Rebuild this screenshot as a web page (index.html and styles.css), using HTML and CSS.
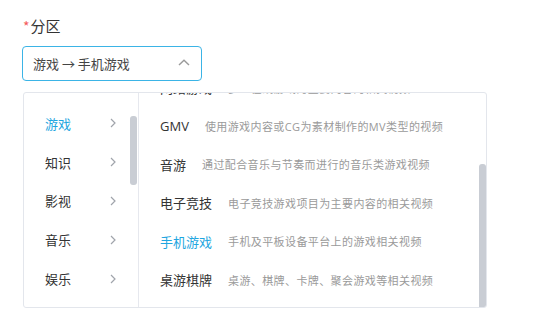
FILE: index.html
```html
<!DOCTYPE html>
<html lang="zh">
<head>
<meta charset="utf-8">
<link rel="stylesheet" href="styles.css">
</head>
<body>
<div class="field">
  <div class="label"><span class="req">*</span>分区</div>
  <div class="select">
    <span class="value">游戏 → 手机游戏</span>
    <svg class="arrow" width="12" height="7" viewBox="0 0 12 7"><path d="M1 6 L6 1.2 L11 6" fill="none" stroke="#9a9a9a" stroke-width="1.4"/></svg>
  </div>
  <div class="panel">
    <div class="col left">
      <ul class="list">
        <li class="item active"><span>游戏</span><svg class="chev" width="6" height="10" viewBox="0 0 6 10"><path d="M1 1 L5 5 L1 9" fill="none" stroke="#a0a4ab" stroke-width="1.2"/></svg></li>
        <li class="item"><span>知识</span><svg class="chev" width="6" height="10" viewBox="0 0 6 10"><path d="M1 1 L5 5 L1 9" fill="none" stroke="#a0a4ab" stroke-width="1.2"/></svg></li>
        <li class="item"><span>影视</span><svg class="chev" width="6" height="10" viewBox="0 0 6 10"><path d="M1 1 L5 5 L1 9" fill="none" stroke="#a0a4ab" stroke-width="1.2"/></svg></li>
        <li class="item"><span>音乐</span><svg class="chev" width="6" height="10" viewBox="0 0 6 10"><path d="M1 1 L5 5 L1 9" fill="none" stroke="#a0a4ab" stroke-width="1.2"/></svg></li>
        <li class="item"><span>娱乐</span><svg class="chev" width="6" height="10" viewBox="0 0 6 10"><path d="M1 1 L5 5 L1 9" fill="none" stroke="#a0a4ab" stroke-width="1.2"/></svg></li>
      </ul>
      <div class="bar bar-left"></div>
    </div>
    <div class="col right">
      <ul class="list sub">
        <li class="row"><span class="title">网络游戏</span><span class="desc">多人在线游戏为主要内容的相关视频</span></li>
        <li class="row"><span class="title">GMV</span><span class="desc">使用游戏内容或CG为素材制作的MV类型的视频</span></li>
        <li class="row"><span class="title">音游</span><span class="desc">通过配合音乐与节奏而进行的音乐类游戏视频</span></li>
        <li class="row"><span class="title">电子竞技</span><span class="desc">电子竞技游戏项目为主要内容的相关视频</span></li>
        <li class="row active"><span class="title">手机游戏</span><span class="desc">手机及平板设备平台上的游戏相关视频</span></li>
        <li class="row"><span class="title">桌游棋牌</span><span class="desc">桌游、棋牌、卡牌、聚会游戏等相关视频</span></li>
      </ul>
      <div class="bar bar-right"></div>
    </div>
  </div>
</div>
</body>
</html>
```

FILE: styles.css
```css
* { box-sizing: border-box; }
html, body { margin: 0; padding: 0; background: #fff; }
body {
  font-family: "Noto Sans CJK SC", "Noto Sans", sans-serif;
  color: #333;
}
.field { padding: 16px 0 0 22px; }
.label {
  font-size: 15px;
  line-height: 20px;
  color: #333;
  padding-left: 1px;
}
.req { color: #f45a5a; margin-right: 1px; font-size: 14px; }
.select {
  margin-top: 10px;
  width: 180px;
  height: 35px;
  border: 1px solid #3bb4e6;
  border-radius: 4px;
  display: flex;
  align-items: center;
  justify-content: space-between;
  padding: 0 11px 0 10px;
}
.value { font-size: 13px; color: #444; }
.arrow { display: block; margin-bottom: 2px; }
.panel {
  margin-top: 11px;
  margin-left: 1px;
  width: 464px;
  height: 216px;
  border: 1px solid #e3e6ec;
  border-radius: 3px;
  display: flex;
  overflow: hidden;
  background: #fff;
}
.col { position: relative; overflow: hidden; height: 100%; }
.left { width: 115px; border-right: 1px solid #e6e8ee; }
.right { flex: 1; }
.list { list-style: none; margin: 0; padding: 11px 0 0 0; }
.item {
  height: 38.8px;
  display: flex;
  align-items: center;
  justify-content: space-between;
  padding: 0 22px 0 21px;
  font-size: 13px;
  color: #333;
}
.item.active { color: #1ea6e0; }
.chev { display: block; }
.sub { padding-top: 0; margin-top: -24.5px; }
.row {
  height: 38.4px;
  display: flex;
  align-items: center;
  padding-left: 21px;
  white-space: nowrap;
}
.title {
  font-family: "Open Sans", "Noto Sans CJK SC", sans-serif;
  font-size: 13px;
  color: #333;
  margin-right: 16px;
}
.desc {
  font-family: "Open Sans", "Noto Sans CJK SC", sans-serif;
  font-size: 11px;
  letter-spacing: 0.4px;
  color: #9a9a9a;
}
.row.active .title { color: #1ea6e0; }
.bar {
  position: absolute;
  right: 0;
  width: 7px;
  background: #c9cdd4;
  border-radius: 3px;
}
.bar-left { top: 23px; height: 69px; right: 1px; }
.bar-right { top: 71px; height: 150px; }
```
